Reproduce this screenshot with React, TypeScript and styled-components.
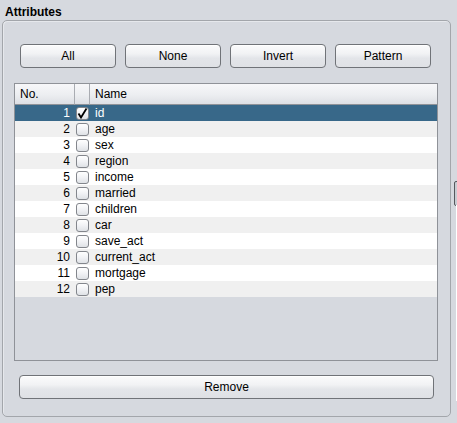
import styled, { createGlobalStyle } from "styled-components";

const GlobalStyle = createGlobalStyle`
  html, body {
    margin: 0;
    padding: 0;
    background: #d6d9df;
  }
  body {
    font-family: "Liberation Sans", Arial, sans-serif;
    font-size: 12px;
    color: #000;
  }
`;

const Page = styled.div`
  position: relative;
  width: 457px;
  height: 423px;
  overflow: hidden;
  background: #d6d9df;
`;

const Title = styled.div`
  padding: 5px 0 0 5px;
  height: 15px;
  font-weight: bold;
  font-size: 12px;
  line-height: 14px;
`;

const Group = styled.div`
  box-sizing: border-box;
  margin: 0 0 0 2px;
  width: 449px;
  height: 397px;
  border: 1px solid #a3a6ab;
  border-radius: 5px;
  box-shadow: inset 1px 1px 0 #e6e8ec;
  display: flex;
  flex-direction: column;
  padding: 23px 12px 0 11px;
`;

const ButtonRow = styled.div`
  display: flex;
  gap: 9px;
  padding-left: 6px;
  margin-bottom: 15px;
`;

const Button = styled.button<{ $wide?: boolean }>`
  box-sizing: border-box;
  width: ${(p) => (p.$wide ? "415px" : "96px")};
  height: 24px;
  border: 1px solid #707378;
  border-radius: 4px;
  background: linear-gradient(
    to bottom,
    #fbfbfc 0%,
    #f1f2f4 40%,
    #e3e5e9 60%,
    #dfe1e5 100%
  );
  box-shadow: inset 0 1px 0 #ffffff;
  font-family: "Liberation Sans", Arial, sans-serif;
  font-size: 12px;
  color: #000;
  padding: 0;
  line-height: 20px;
`;

const Table = styled.div`
  box-sizing: border-box;
  width: 424px;
  height: 278px;
  border: 1px solid #8f9298;
  background: #d6d9df;
  display: flex;
  flex-direction: column;
`;

const Grid = styled.div`
  display: grid;
  grid-template-columns: 60px 15px 1fr;
`;

const HeaderCell = styled.div<{ $last?: boolean }>`
  height: 21px;
  box-sizing: border-box;
  border-right: ${(p) => (p.$last ? "none" : "1px solid #a9acb2")};
  border-bottom: 1px solid #8f9298;
  background: linear-gradient(to bottom, #f7f7f9 0%, #eceef1 55%, #dddfe4 100%);
  padding-left: 5px;
  line-height: 21px;
  font-size: 12px;
`;

const Cell = styled.div<{ $bg: string; $color: string; $align?: string }>`
  height: 16px;
  line-height: 16px;
  background: ${(p) => p.$bg};
  color: ${(p) => p.$color};
  font-size: 12px;
  white-space: nowrap;
  display: flex;
  align-items: center;
  justify-content: ${(p) => (p.$align === "right" ? "flex-end" : "flex-start")};
`;

const NumCell = styled(Cell)`
  padding-right: 5px;
`;

const NameCell = styled(Cell)`
  padding-left: 5px;
`;

const Box = styled.div`
  box-sizing: border-box;
  width: 13px;
  height: 13px;
  margin-left: 1px;
  border: 1px solid #83868c;
  border-radius: 3px;
  background: linear-gradient(to bottom, #ffffff 0%, #f1f2f5 50%, #dfe2e6 100%);
  display: flex;
  align-items: center;
  justify-content: center;
`;

const RemoveWrap = styled.div`
  padding: 14px 0 0 5px;
`;

const SplitHandle = styled.div`
  position: absolute;
  left: 454px;
  top: 181px;
  width: 6px;
  height: 23px;
  border: 1px solid #55585d;
  border-radius: 2px;
  background: #c9ccd2;
`;

const SplitLine = styled.div`
  position: absolute;
  left: 456px;
  top: 205px;
  width: 1px;
  height: 196px;
  background: #ffffff;
`;

const attrs = [
  "id",
  "age",
  "sex",
  "region",
  "income",
  "married",
  "children",
  "car",
  "save_act",
  "current_act",
  "mortgage",
  "pep",
];

function Check({ on }: { on: boolean }) {
  return (
    <Box>
      {on && (
        <svg width="11" height="11" viewBox="0 0 11 11">
          <path d="M1.5 5.5 L4 9.5 L9.5 0.5" fill="none" stroke="#000" strokeWidth="1.8" />
        </svg>
      )}
    </Box>
  );
}

export default function App() {
  return (
    <Page>
      <GlobalStyle />
      <Title>Attributes</Title>
      <Group>
        <ButtonRow>
          <Button>All</Button>
          <Button>None</Button>
          <Button>Invert</Button>
          <Button>Pattern</Button>
        </ButtonRow>
        <Table>
          <Grid>
            <HeaderCell>No.</HeaderCell>
            <HeaderCell />
            <HeaderCell $last>Name</HeaderCell>
            {attrs.map((name, i) => {
              const sel = i === 0;
              const bg = sel ? "#386889" : i % 2 === 1 ? "#f0f0f0" : "#ffffff";
              const color = sel ? "#ffffff" : "#000000";
              return [
                <NumCell key={name + "n"} $bg={bg} $color={color} $align="right">
                  {i + 1}
                </NumCell>,
                <Cell key={name + "c"} $bg={bg} $color={color}>
                  <Check on={sel} />
                </Cell>,
                <NameCell key={name + "t"} $bg={bg} $color={color}>
                  {name}
                </NameCell>,
              ];
            })}
          </Grid>
        </Table>
        <RemoveWrap>
          <Button $wide>Remove</Button>
        </RemoveWrap>
      </Group>
      <SplitHandle />
      <SplitLine />
    </Page>
  );
}
